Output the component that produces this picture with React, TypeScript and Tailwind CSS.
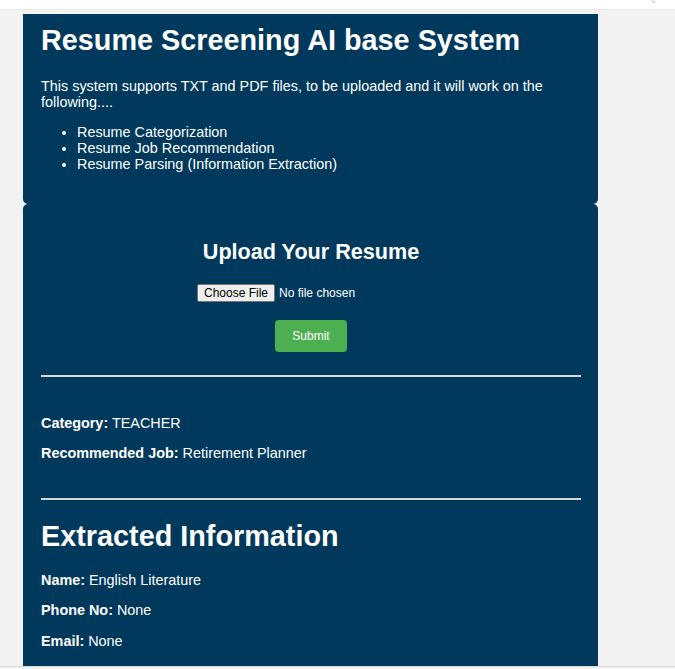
import React from 'react';

const results = [
  { label: 'Category:', value: 'TEACHER' },
  { label: 'Recommended Job:', value: 'Retirement Planner' },
];

const extracted = [
  { label: 'Name:', value: 'English Literature', mt: 'mt-[19px]' },
  { label: 'Phone No:', value: 'None', mt: 'mt-[14px]' },
  { label: 'Email:', value: 'None', mt: 'mt-[15px]' },
];

function Field({ label, value, className = '' }: { label: string; value: string; className?: string }) {
  return (
    <p className={`text-[14.4px] leading-[16px] ${className}`}>
      <strong className="font-bold">{label}</strong> {value}
    </p>
  );
}

export default function App() {
  return (
    <div className="h-[669px] overflow-hidden flex flex-col bg-[#f2f2f2] text-white font-['Liberation_Sans',Arial,sans-serif]">
      {/* browser strip */}
      <div className="relative h-[10px] shrink-0 bg-white border-b border-[#e8e8e8]">
        <svg className="absolute right-[19px] top-0" width="5" height="4" viewBox="0 0 5 4">
          <path d="M1 0.5 L3.5 3" stroke="#9a9a9a" strokeWidth="1" />
        </svg>
      </div>

      <div className="flex-1 min-h-0 overflow-hidden pt-[4px] pl-[23px]">
        <div className="w-[575px]">
          {/* intro panel */}
          <section className="bg-[#01395c] rounded-b-[5px] pl-[18px] pr-[17px] pt-[10px] pb-[32px]">
            <h1 className="text-[28.8px] leading-[33px] font-bold">Resume Screening AI base System</h1>
            <p className="mt-[21px] text-[14.4px] leading-[16px]">
              This system supports TXT and PDF files, to be uploaded and it will work on the following....
            </p>
            <ul className="mt-[14px] list-disc pl-[36px] text-[14.4px] leading-[16px]">
              <li>Resume Categorization</li>
              <li>Resume Job Recommendation</li>
              <li>Resume Parsing (Information Extraction)</li>
            </ul>
          </section>

          {/* upload + results panel */}
          <section className="bg-[#01395c] rounded-t-[5px] pl-[18px] pr-[17px] pt-[35px] pb-[60px]">
            <h2 className="text-center text-[21.6px] leading-[25px] font-bold">Upload Your Resume</h2>
            <div className="mt-[20px] flex justify-center">
              <div className="w-[228px] h-[18px] flex items-center text-[12px] leading-[14px]">
                <span className="h-[18px] flex items-center px-[6px] mr-[4px] bg-[#efefef] text-black border border-[#767676] rounded-[2px]">
                  Choose File
                </span>
                <span>No file chosen</span>
              </div>
            </div>
            <div className="mt-[18px] flex justify-center">
              <button className="h-[32px] w-[72px] rounded-[4px] bg-[#4caf50] text-[12px] text-white">Submit</button>
            </div>

            <div className="mt-[23px] h-[2px] bg-[#d6d6d6]" />

            <Field className="mt-[38px]" label={results[0].label} value={results[0].value} />
            <Field className="mt-[14px]" label={results[1].label} value={results[1].value} />

            <div className="mt-[37px] h-[2px] bg-[#d6d6d6]" />

            <h1 className="mt-[20px] text-[28.8px] leading-[33px] font-bold">Extracted Information</h1>
            {extracted.map((f) => (
              <Field key={f.label} className={f.mt} label={f.label} value={f.value} />
            ))}
          </section>
        </div>
      </div>

      <div className="h-[3px] shrink-0 border-t border-[#d8d8d8] bg-[#f4f4f4]" />
    </div>
  );
}
